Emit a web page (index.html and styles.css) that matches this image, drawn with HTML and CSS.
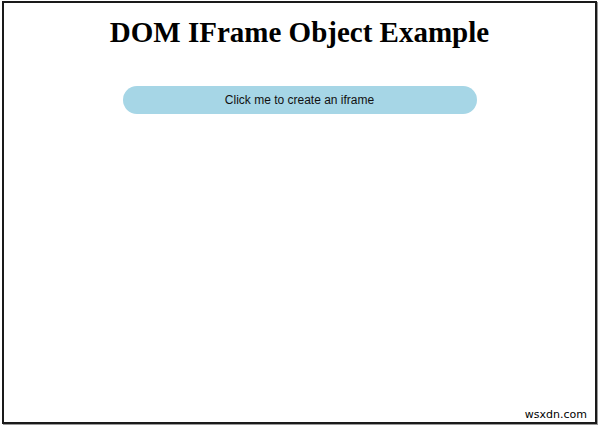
FILE: index.html
```html
<!DOCTYPE html>
<html>
<head>
<meta charset="utf-8">
<link rel="stylesheet" href="styles.css">
</head>
<body>
<div class="frame">
  <h1 class="title">DOM IFrame Object Example</h1>
  <div class="actions">
    <button class="create-btn">Click me to create an iframe</button>
  </div>
  <div class="spacer"></div>
  <div class="watermark">wsxdn.com</div>
</div>
</body>
</html>
```
FILE: styles.css
```css
html, body {
  margin: 0;
  padding: 0;
  background: #fff;
}
body {
  width: 600px;
  height: 425px;
  padding: 1px 3px 1px 2px;
  box-sizing: border-box;
}
.frame {
  height: 100%;
  box-sizing: border-box;
  border: 2px solid #1a1a1a;
  box-shadow: 1px 1px 0 #999;
  display: flex;
  flex-direction: column;
}
.title {
  margin: 11px 0 0 0;
  text-align: center;
  font-family: "Liberation Serif", "Times New Roman", serif;
  font-weight: bold;
  font-size: 29px;
  line-height: 36px;
  color: #000;
}
.actions {
  display: flex;
  justify-content: center;
  margin-top: 36px;
}
.create-btn {
  width: 354px;
  height: 28px;
  border: none;
  border-radius: 14px;
  background: #a6d6e6;
  font-family: "Liberation Sans", Arial, sans-serif;
  font-size: 12px;
  color: #111;
  padding: 0;
}
.spacer {
  flex: 1;
}
.watermark {
  align-self: flex-end;
  font-family: "DejaVu Sans", Verdana, sans-serif;
  font-size: 11px;
  color: #000;
  margin: 0 8px 1px 0;
}
```
